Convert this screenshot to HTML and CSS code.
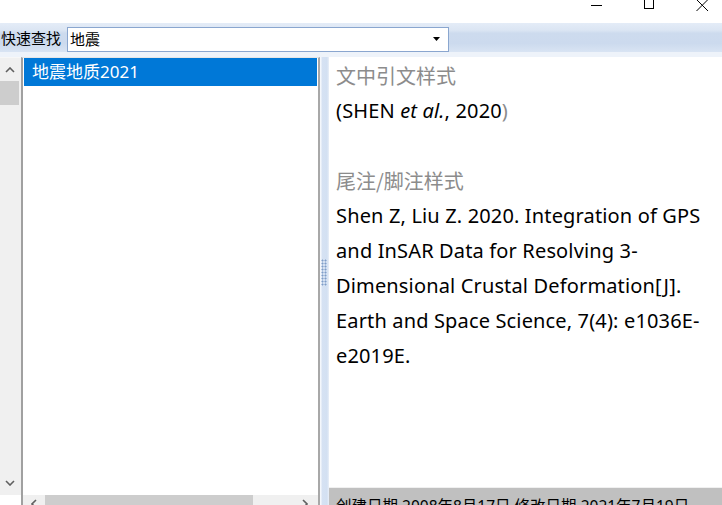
FILE: index.html
```html
<!DOCTYPE html>
<html lang="zh">
<head>
<meta charset="utf-8">
<title>快速查找</title>
<link rel="stylesheet" href="styles.css">
</head>
<body>
<div class="window">
  <div class="titlebar">
    <svg class="ctl ctl-min" width="12" height="10" viewBox="0 0 12 10"><path d="M0 5.5H11" stroke="#000" stroke-width="1"/></svg>
    <svg class="ctl ctl-max" width="10" height="10" viewBox="0 0 10 10"><rect x="0.5" y="-1" width="9" height="9.5" fill="none" stroke="#000" stroke-width="1"/></svg>
    <svg class="ctl ctl-close" width="13" height="12" viewBox="0 0 13 12"><path d="M0.5 -0.5L12 11M12 -0.5L0.5 11" stroke="#000" stroke-width="1"/></svg>
  </div>
  <div class="toolbar">
    <span class="tb-label">快速查找</span>
    <div class="combo">
      <span class="combo-text">地震</span>
      <svg class="combo-arrow" width="7" height="4" viewBox="0 0 7 4"><path d="M0 0H7L3.5 4Z" fill="#000"/></svg>
    </div>
  </div>
  <div class="toolstrip"></div>
  <div class="main">
    <div class="leftpane">
      <div class="vscroll">
        <svg class="arrow-up" width="10" height="6" viewBox="0 0 10 6"><path d="M1 5L5 1L9 5" fill="none" stroke="#606060" stroke-width="1.6"/></svg>
        <div class="vthumb"></div>
        <div class="vspace"></div>
        <svg class="arrow-down" width="10" height="6" viewBox="0 0 10 6"><path d="M1 1L5 5L9 1" fill="none" stroke="#606060" stroke-width="1.6"/></svg>
      </div>
      <div class="listbox">
        <div class="items">
          <div class="item selected">地震地质2021</div>
        </div>
        <div class="hscroll">
          <svg class="arrow-left" width="6" height="10" viewBox="0 0 6 10"><path d="M5 1L1 5L5 9" fill="none" stroke="#606060" stroke-width="1.6"/></svg>
          <div class="hthumb"></div>
          <div class="hspace"></div>
          <svg class="arrow-right" width="6" height="10" viewBox="0 0 6 10"><path d="M1 1L5 5L1 9" fill="none" stroke="#606060" stroke-width="1.6"/></svg>
        </div>
      </div>
    </div>
    <div class="splitter"><div class="grip"></div></div>
    <div class="rightpane">
      <div class="content">
        <div class="heading">文中引文样式</div>
        <div class="line">(SHEN <i>et al.</i>, 2020<span class="dim">)</span></div>
        <div class="line">&nbsp;</div>
        <div class="heading">尾注/脚注样式</div>
        <div class="line">Shen Z, Liu Z. 2020. Integration of GPS</div>
        <div class="line">and InSAR Data for Resolving 3-</div>
        <div class="line">Dimensional Crustal Deformation[J].</div>
        <div class="line">Earth and Space Science, 7(4): e1036E-</div>
        <div class="line">e2019E.</div>
      </div>
      <div class="statusbar">创建日期 2008年8月17日 修改日期 2021年7月19日</div>
    </div>
  </div>
</div>
</body>
</html>
```
FILE: styles.css
```css
html, body {
  margin: 0;
  padding: 0;
  background: #fff;
}
body {
  width: 722px;
  height: 505px;
  overflow: hidden;
  font-family: "Noto Sans CJK SC", "Noto Sans", sans-serif;
  color: #000;
}
.window {
  display: flex;
  flex-direction: column;
  width: 722px;
  height: 505px;
}
.titlebar {
  height: 23px;
  flex: none;
  display: flex;
  align-items: flex-start;
  background: #fff;
}
.ctl { display: block; }
.ctl-min { margin-left: 591px; }
.ctl-max { margin-left: 41px; }
.ctl-close { margin-left: 42px; }

.toolbar {
  height: 29px;
  flex: none;
  display: flex;
  align-items: center;
  background: linear-gradient(to bottom, #e4ecf7 0%, #dbe5f3 25%, #cddbee 35%, #ccdaee 70%, #d9e4f3 100%);
}
.tb-label {
  font-size: 15px;
  line-height: 20px;
  margin-left: 1px;
  width: 66px;
  flex: none;
}
.combo {
  width: 380px;
  height: 23px;
  margin-top: 3px;
  border: 1px solid #8aa6cf;
  background: #fff;
  display: flex;
  align-items: center;
  box-sizing: content-box;
}
.combo-text {
  font-size: 15px;
  line-height: 20px;
  margin-left: 2px;
  flex: 1;
}
.combo-arrow {
  margin-right: 8px;
}
.toolstrip {
  height: 5px;
  flex: none;
  background: #eef3fa;
}
.main {
  flex: 1;
  display: flex;
  min-height: 0;
}
.leftpane {
  width: 320px;
  flex: none;
  display: flex;
}
.vscroll {
  width: 21px;
  flex: none;
  height: 437px;
  background: #f0f0f0;
  display: flex;
  flex-direction: column;
  align-items: center;
  border-top: 1px solid #f7f7f7;
}
.arrow-up { margin-top: 9px; margin-left: -2px; }
.vthumb {
  width: 19px;
  height: 24px;
  margin-top: 8px;
  margin-left: -2px;
  background: #cdcdcd;
}
.vspace { flex: 1; }
.arrow-down { margin-bottom: 9px; margin-left: -2px; }
.listbox {
  flex: 1;
  display: flex;
  flex-direction: column;
  border-left: 2px solid #a0a0a0;
  border-right: 2px solid #a8a8a8;
  border-top: 1px solid #e6e6e6;
  background: #fff;
}
.items {
  flex: 1;
  padding: 0 1px;
}
.item {
  height: 28px;
  line-height: 28px;
  font-size: 17px;
  padding-left: 8px;
  font-family: "Noto Sans", "Noto Sans CJK SC", sans-serif;
}
.item.selected {
  background: #0078d7;
  color: #fff;
}
.hscroll {
  height: 10px;
  flex: none;
  background: #f0f0f0;
  display: flex;
  align-items: flex-start;
  overflow: hidden;
}
.arrow-left { margin-left: 8px; margin-top: 4px; }
.hthumb {
  width: 208px;
  height: 17px;
  margin-left: 8px;
  background: #cdcdcd;
}
.hspace { flex: 1; }
.arrow-right { margin-right: 10px; margin-top: 4px; }

.splitter {
  width: 9px;
  flex: none;
  background: linear-gradient(to right, #f4f7fc 0, #f4f7fc 1px, #d6e2f3 2px, #d3e0f2 7px, #e9eff8 9px);
  display: flex;
  align-items: center;
  justify-content: center;
}
.grip {
  width: 6px;
  height: 27px;
  margin-top: -18px;
  margin-left: -1px;
  background-image: radial-gradient(circle, #7f9dc8 0.8px, transparent 1.2px);
  background-size: 3px 3px;
}
.rightpane {
  flex: 1;
  display: flex;
  flex-direction: column;
  background: #fff;
}
.content {
  flex: 1;
  padding: 1px 0 0 7px;
  font-size: 20px;
  letter-spacing: 0.15px;
  line-height: 35px;
  font-family: "Noto Sans", "Noto Sans CJK SC", sans-serif;
}
.heading {
  color: #8c8c8c;
  font-size: 20px;
  letter-spacing: 0;
  font-family: "Noto Sans CJK SC", "Noto Sans", sans-serif;
}
.line { white-space: nowrap; }
.dim { color: #8c8c8c; }
.statusbar {
  height: 18px;
  flex: none;
  background: #c0c0c0;
  border-top: 1px solid #f0f0f0;
  padding: 8px 0 0 7px;
  box-sizing: border-box;
  overflow: hidden;
  font-size: 15.5px;
  line-height: 20px;
  white-space: nowrap;
  font-family: "Noto Sans", "Noto Sans CJK SC", sans-serif;
}
```
